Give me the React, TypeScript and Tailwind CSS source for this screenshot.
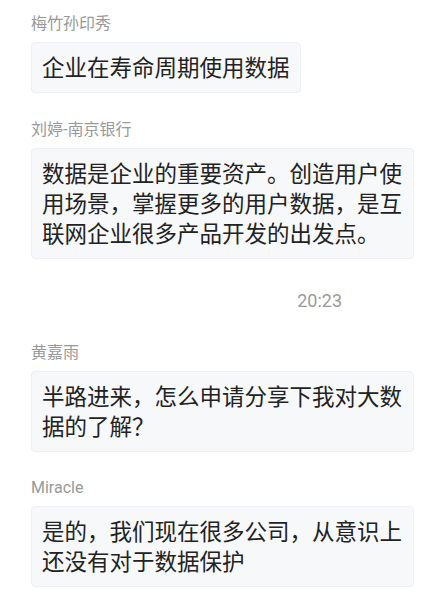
const messages = [
  { name: "梅竹孙印秀", text: "企业在寿命周期使用数据" },
  {
    name: "刘婷-南京银行",
    text: "数据是企业的重要资产。创造用户使用场景，掌握更多的用户数据，是互联网企业很多产品开发的出发点。",
  },
];

const laterMessages = [
  { name: "黄嘉雨", text: "半路进来，怎么申请分享下我对大数据的了解？" },
  { name: "Miracle", text: "是的，我们现在很多公司，从意识上还没有对于数据保护" },
];

function Message({ name, text }: { name: string; text: string }) {
  return (
    <div className="flex flex-col items-start gap-2">
      <div className="text-[16px] leading-[20px] text-[#999999]">{name}</div>
      <div className="max-w-[383px] rounded-[4px] border border-[#eef0f3] bg-[#f7f8fa] px-[10px] pt-[10px] pb-[9px] text-[22.5px] leading-[30px] text-[#222222]">
        {text}
      </div>
    </div>
  );
}

export default function App() {
  return (
    <div
      className="h-[598px] w-[425px] overflow-hidden bg-white pl-[31px] pt-[14px]"
      style={{ fontFamily: 'Roboto, "Noto Sans CJK SC", sans-serif' }}
    >
      <div className="flex flex-col gap-[27px]">
        {messages.map((m) => (
          <Message key={m.name} {...m} />
        ))}
      </div>

      {/* Timestamp */}
      <div className="flex justify-end pr-[83px] pt-[30px] pb-[30px]">
        <span className="text-[18px] leading-[24px] text-[#9a9a9a]">20:23</span>
      </div>

      <div className="flex flex-col gap-[26px]">
        {laterMessages.map((m) => (
          <Message key={m.name} {...m} />
        ))}
      </div>
    </div>
  );
}
